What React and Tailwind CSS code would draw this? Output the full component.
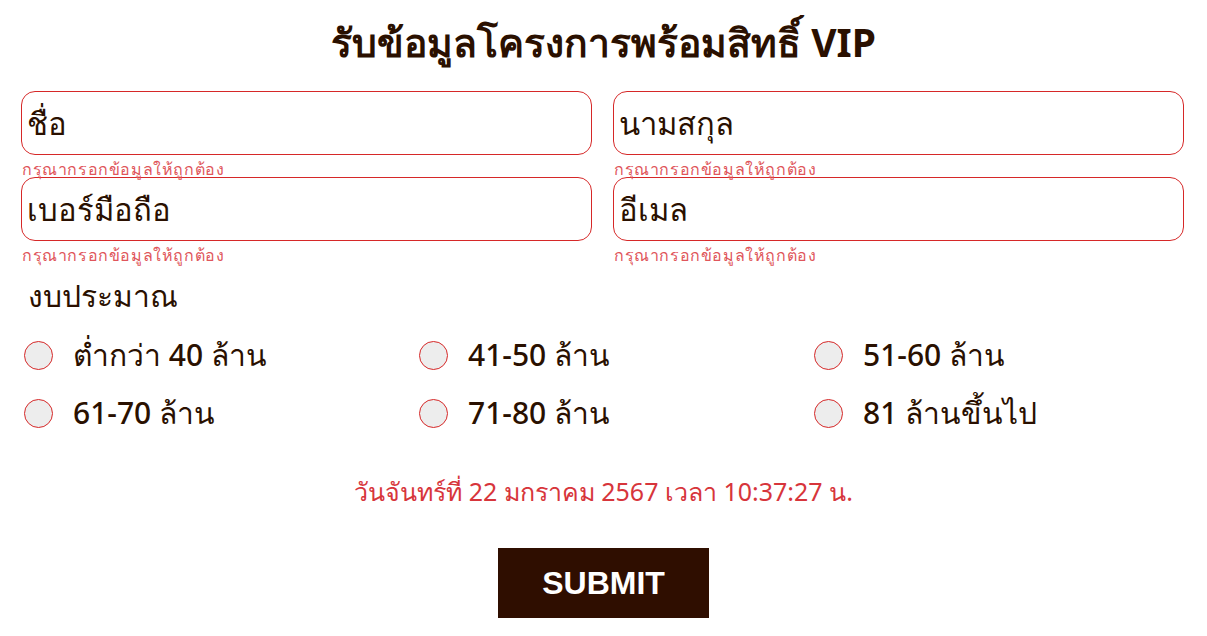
import React from "react";

const fields = [
  ["ชื่อ", "นามสกุล"],
  ["เบอร์มือถือ", "อีเมล"],
];

const budgets = [
  "ต่ำกว่า 40 ล้าน",
  "41-50 ล้าน",
  "51-60 ล้าน",
  "61-70 ล้าน",
  "71-80 ล้าน",
  "81 ล้านขึ้นไป",
];

const Field = ({ label }) => (
  <div className="flex flex-col">
    <div className="h-[64px] rounded-[14px] border border-[#d62828] flex items-center pl-[5px]">
      <span className="text-[31px] text-[#2a1000] leading-none">{label}</span>
    </div>
    <p className="h-[22px] text-[16px] leading-[22px] tracking-[0.6px] text-[#e0565b] px-[1px] pt-[3px] relative">
      กรุณากรอกข้อมูลให้ถูกต้อง
    </p>
  </div>
);

export default function App() {
  return (
    <div
      className="w-[1207px] h-[636px] bg-white px-[21px] pt-[14px]"
      style={{ fontFamily: '"Noto Sans", "Liberation Sans", sans-serif' }}
    >
      <h1 className="text-center text-[39px] font-bold leading-[56px] text-[#2a1000]">
        รับข้อมูลโครงการพร้อมสิทธิ์ VIP
      </h1>

      <div className="mt-[21px] pr-[2px]">
        {fields.map((row, i) => (
          <div key={i} className="grid grid-cols-2 gap-x-[21px]">
            {row.map((f) => (
              <Field key={f} label={f} />
            ))}
          </div>
        ))}
      </div>

      <p className="mt-[16px] pl-[7px] text-[30px] leading-[34px] text-[#2a1000]">งบประมาณ</p>

      <div className="mt-[27px] grid grid-cols-[395px_395px_1fr] gap-y-[28px] pl-[3px]">
        {budgets.map((b) => (
          <label key={b} className="flex items-center gap-[20px] h-[30px]">
            <span className="w-[29px] h-[29px] rounded-full bg-[#ededed] border border-[#d62828] shrink-0" />
            <span className="text-[30px] font-medium leading-none text-[#2a1000]">{b}</span>
          </label>
        ))}
      </div>

      <p className="mt-[47px] text-center text-[25px] leading-[32px] text-[#d7353b]">
        วันจันทร์ที่ 22 มกราคม 2567 เวลา 10:37:27 น.
      </p>

      <div className="mt-[41px] flex justify-center">
        <button
          className="w-[211px] h-[70px] bg-[#2f0e00] text-white text-[32px] font-bold"
          style={{ fontFamily: '"Liberation Sans", Arial, sans-serif' }}
        >
          SUBMIT
        </button>
      </div>
    </div>
  );
}
